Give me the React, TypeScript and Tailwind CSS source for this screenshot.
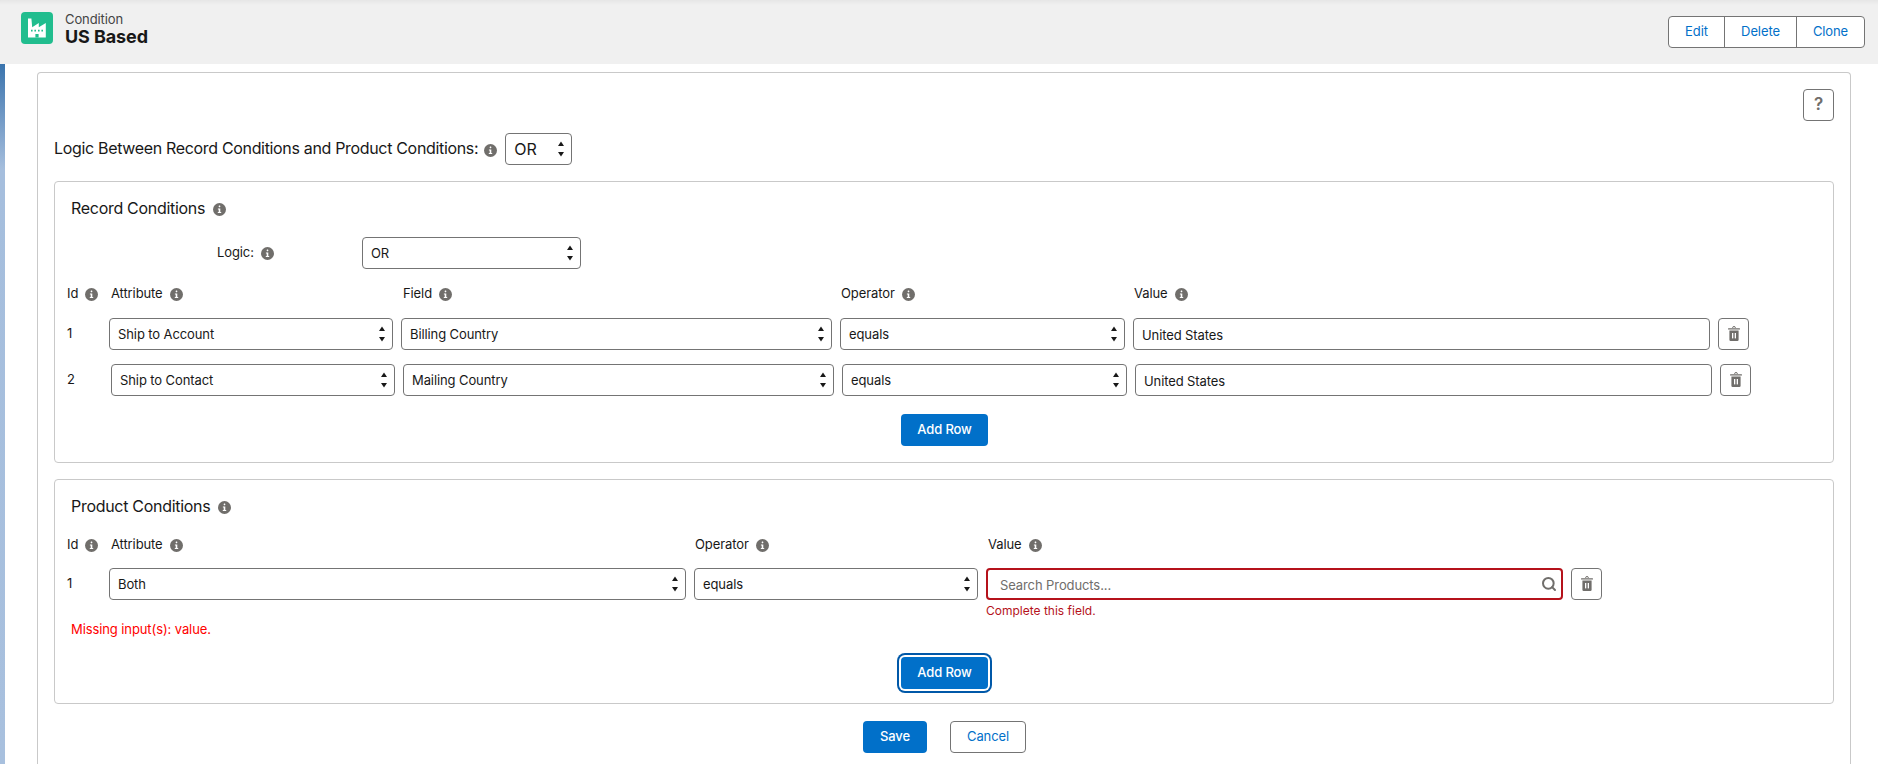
import { Search } from 'lucide-react'

const font = "[font-family:Inter,'Liberation_Sans',sans-serif]"

function Info({ className = '' }: { className?: string }) {
  return (
    <svg viewBox="0 0 13 13" className={`h-[13px] w-[13px] shrink-0 ${className}`}>
      <circle cx="6.5" cy="6.5" r="6.5" fill="#706e6b" />
      <rect x="5.7" y="2.6" width="1.6" height="1.6" rx="0.4" fill="#fff" />
      <path d="M4.9 5.4h2.4v3.6h0.9v1H4.8V9h0.9V6.4h-0.8z" fill="#fff" />
    </svg>
  )
}

function Arrows() {
  return (
    <svg viewBox="0 0 8 18" className="pointer-events-none absolute right-[7px] top-1/2 h-[18px] w-[8px] -translate-y-1/2">
      <path d="M4 1.5 7 6H1z" fill="#181818" />
      <path d="M4 16.5 1 12h6z" fill="#181818" />
    </svg>
  )
}

function Select({ value, className = '' }: { value: string; className?: string }) {
  return (
    <div className={`relative h-8 shrink-0 ${className}`}>
      <select
        defaultValue={value}
        className="h-full w-full appearance-none rounded border border-[#747474] bg-white pl-2 pr-6 pt-[2px] text-[13px] text-[#181818] outline-none"
      >
        <option>{value}</option>
      </select>
      <Arrows />
    </div>
  )
}

function TrashButton() {
  return (
    <button className="flex h-8 w-[31px] shrink-0 items-center justify-center rounded border border-[#747474] bg-white">
      <svg viewBox="0 0 14 16" className="h-4 w-[14px]">
        <path d="M5.6 1.9a1.4 1.4 0 0 1 2.8 0" fill="none" stroke="#706e6b" strokeWidth="1" />
        <rect x="1" y="2.3" width="12" height="1.3" rx="0.4" fill="#706e6b" />
        <path d="M2.4 4.6h9.2v9.2a1.2 1.2 0 0 1-1.2 1.2H3.6a1.2 1.2 0 0 1-1.2-1.2z" fill="#706e6b" />
        <rect x="5" y="7" width="1.3" height="5.4" fill="#fff" />
        <rect x="7.7" y="7" width="1.3" height="5.4" fill="#fff" />
      </svg>
    </button>
  )
}

function Label({ text, className = '' }: { text: string; className?: string }) {
  return (
    <div className={`flex shrink-0 items-center gap-[7px] text-[13px] text-[#181818] ${className}`}>
      <span>{text}</span>
      <Info />
    </div>
  )
}

function Brand({ className = '', children }: { className?: string; children: string }) {
  return (
    <button className={`h-8 rounded bg-[#0170c9] text-[13px] font-medium text-white ${className}`}>
      {children}
    </button>
  )
}

function RecordRow({ id, attribute, field, className = '' }: { id: string; attribute: string; field: string; className?: string }) {
  return (
    <div className="flex h-8 items-start">
      <div className="w-[42px] shrink-0 pt-[6px] text-[13px] text-[#181818]">{id}</div>
      <div className={`flex gap-2 ${className}`}>
        <Select value={attribute} className="w-[284px]" />
        <Select value={field} className="w-[431px]" />
        <Select value="equals" className="w-[285px]" />
        <input
          readOnly
          value="United States"
          className="h-8 w-[577px] rounded border border-[#747474] bg-white px-2 pt-[2px] text-[13px] text-[#181818] outline-none"
        />
        <TrashButton />
      </div>
    </div>
  )
}

export default function App() {
  return (
    <div className={`flex h-screen flex-col overflow-hidden bg-white tracking-[-0.1px] ${font}`}>
      {/* Header */}
      <div className="flex h-16 shrink-0 items-start justify-between bg-[#f0f0f0] bg-gradient-to-b from-[#e6e6e6] to-[#f0f0f0] to-[5px] pl-[21px] pr-[13px] pt-3">
        <div className="flex items-start gap-3">
          <div className="flex h-8 w-8 items-center justify-center rounded bg-[#21bd8e]">
            <svg viewBox="0 0 32 32" className="h-8 w-8">
              <path d="M7 6.5h3.4l.8 8.8 6.6-4.3v4.3l7-4.3V25.5H7z" fill="#fff" />
              <path d="M10 18.6h1.6M13.4 18.6H15M17 18.6h1.6M20.4 18.6H22" stroke="#21bd8e" strokeWidth="1.8" />
              <rect x="14.4" y="22" width="3.2" height="3.5" fill="#21bd8e" />
            </svg>
          </div>
          <div className="-mt-px">
            <div className="text-[13px] leading-[16px] text-[#444]">Condition</div>
            <div className="text-[18px] font-bold leading-[20px] text-[#181818]">US Based</div>
          </div>
        </div>
        <div className="mt-1 flex h-8 overflow-hidden rounded border border-[#747474] bg-white text-[13px] text-[#0170c9]">
          <button className="w-14 border-r border-[#747474]">Edit</button>
          <button className="w-[72px] border-r border-[#747474]">Delete</button>
          <button className="w-[67px]">Clone</button>
        </div>
      </div>

      <div className="flex min-h-0 flex-1">
        {/* background peeking through on the left */}
        <div className="w-[5px] shrink-0 bg-gradient-to-b from-[#3a74ad] via-[#a5bedd] to-[#a8c0de] via-[15%]" />

        <div className="ml-[32px] mt-2 w-[1814px] shrink-0 rounded-t border border-b-0 border-[#c9c9c9] bg-white pl-4 pr-4 pt-4">
          <div className="flex justify-end">
            <button className="flex h-8 w-[31px] items-center justify-center rounded border border-[#747474] text-[17px] font-semibold text-[#706e6b]">
              ?
            </button>
          </div>

          <div className="mt-[12px] flex h-8 items-center">
            <span className="-mt-[2px] text-[16px] tracking-[-0.33px] text-[#181818]">Logic Between Record Conditions and Product Conditions:</span>
            <Info className="ml-[6px] mt-[3px]" />
            <div className="relative ml-2 h-8 w-[67px]">
              <select
                defaultValue="OR"
                className="h-full w-full appearance-none rounded border border-[#747474] bg-white pl-[8px] text-[16px] text-[#181818] outline-none"
              >
                <option>OR</option>
              </select>
              <Arrows />
            </div>
          </div>

          {/* Record conditions */}
          <div className="mt-4 h-[282px] w-[1780px] rounded border border-[#c9c9c9] pl-3 pt-[15px]">
            <div className="flex items-center gap-2 pl-[4px] text-[16px] leading-[22px] tracking-[-0.3px] text-[#181818]">
              <span>Record Conditions</span>
              <Info className="mt-[3px]" />
            </div>
            <div className="mt-[18px] flex h-8 items-center">
              <Label text="Logic:" className="ml-[150px] w-[145px]" />
              <Select value="OR" className="w-[219px]" />
            </div>
            <div className="mt-[17px] flex h-4 items-center">
              <Label text="Id" className="w-[44px]" />
              <Label text="Attribute" className="w-[292px]" />
              <Label text="Field" className="w-[438px]" />
              <Label text="Operator" className="w-[293px]" />
              <Label text="Value" />
            </div>
            <div className="mt-[16px] flex flex-col gap-[14px]">
              <RecordRow id="1" attribute="Ship to Account" field="Billing Country" />
              <RecordRow id="2" attribute="Ship to Contact" field="Mailing Country" className="ml-[2px]" />
            </div>
            <div className="mt-[18px] flex justify-center pr-[11px]">
              <Brand className="w-[87px]">Add Row</Brand>
            </div>
          </div>

          {/* Product conditions */}
          <div className="mt-4 h-[225px] w-[1780px] rounded border border-[#c9c9c9] pl-3 pt-[15px]">
            <div className="flex items-center gap-2 pl-[4px] text-[16px] leading-[22px] tracking-[-0.3px] text-[#181818]">
              <span>Product Conditions</span>
              <Info className="mt-[3px]" />
            </div>
            <div className="mt-[20px] flex h-4 items-center">
              <Label text="Id" className="w-[44px]" />
              <Label text="Attribute" className="w-[584px]" />
              <Label text="Operator" className="w-[293px]" />
              <Label text="Value" />
            </div>
            <div className="mt-[15px] flex items-start">
              <div className="w-[42px] shrink-0 pt-[6px] text-[13px] text-[#181818]">1</div>
              <div className="flex gap-2">
                <Select value="Both" className="w-[577px]" />
                <Select value="equals" className="w-[284px]" />
                <div className="w-[577px] shrink-0">
                  <div className="relative h-8">
                    <input
                      readOnly
                      placeholder="Search Products..."
                      className="h-full w-full rounded border-2 border-[#b5121b] bg-white pl-3 pr-8 pt-[2px] text-[13px] text-[#181818] outline-none placeholder:text-[#706e6b]"
                    />
                    <Search className="absolute right-[6px] top-[8px] h-4 w-4 text-[#706e6b]" strokeWidth={3} />
                  </div>
                  <div className="mt-[3px] text-[12px] leading-4 tracking-normal text-[#b5121b]">Complete this field.</div>
                </div>
                <TrashButton />
              </div>
            </div>
            <div className="mt-px pl-[4px] text-[13px] leading-[18px] text-[#ff0000]">Missing input(s): value.</div>
            <div className="mt-[19px] flex justify-center pr-[11px]">
              <Brand className="w-[87px] shadow-[0_0_0_2px_#fff,0_0_0_4px_#0058a8]">Add Row</Brand>
            </div>
          </div>

          {/* Footer actions */}
          <div className="mt-[17px] flex justify-center gap-[23px] pl-px">
            <Brand className="w-[64px]">Save</Brand>
            <button className="h-8 w-[76px] rounded border border-[#747474] bg-white text-[13px] text-[#0170c9]">Cancel</button>
          </div>
        </div>
      </div>
    </div>
  )
}
